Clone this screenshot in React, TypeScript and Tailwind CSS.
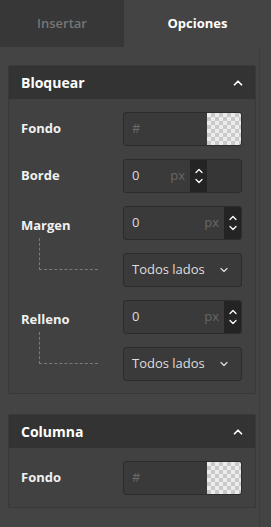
import { ChevronDown, ChevronUp } from "lucide-react";

const font = { fontFamily: '"Open Sans", "Liberation Sans", sans-serif' };

const checker =
  "bg-[image:conic-gradient(#c9c9c9_25%,#ececec_0_50%,#c9c9c9_0_75%,#ececec_0)] bg-[length:8px_8px]";

function Label({ children, low }: { children: React.ReactNode; low?: boolean }) {
  return (
    <div
      className={`w-[114px] shrink-0 pl-3 text-[13px] font-bold text-[#f0f0f0] ${
        low ? "mt-[6px]" : ""
      }`}
    >
      {children}
    </div>
  );
}

function ColorInput() {
  return (
    <div className="flex h-[34px] w-[119px] overflow-hidden rounded-[3px] border border-[#2c2c2c] bg-[#3a3a3a]">
      <span className="flex flex-1 items-center pl-2 text-[13px] text-[#6a6a6a]">#</span>
      <span className={`h-full w-[34px] ${checker}`} />
    </div>
  );
}

function Stepper({ rounded }: { rounded?: boolean }) {
  return (
    <span
      className={`flex h-full w-[17px] flex-col items-center justify-center bg-[#242424] text-white ${
        rounded ? "rounded-r-[3px]" : ""
      }`}
    >
      <ChevronUp size={12} strokeWidth={2.5} className="-mb-[1px]" />
      <ChevronDown size={12} strokeWidth={2.5} className="-mt-[1px]" />
    </span>
  );
}

function NumberInput({ wide }: { wide?: boolean }) {
  return (
    <div className="flex h-[34px] w-[119px] overflow-hidden rounded-[3px] border border-[#2c2c2c] bg-[#3a3a3a]">
      <div className={`flex items-center pl-2 pr-[5px] ${wide ? "flex-1" : "w-[66px]"}`}>
        <span className="flex-1 text-[13px] text-[#dddddd]">0</span>
        <span className="text-[13px] text-[#676767]">px</span>
      </div>
      <Stepper rounded={wide} />
      {!wide && <span className="flex-1 bg-[#363636]" />}
    </div>
  );
}

function SidesSelect() {
  return (
    <div className="flex h-[34px] w-[119px] items-center justify-between rounded-[3px] border border-[#2c2c2c] bg-[#3a3a3a] pl-2 pr-[11px]">
      <span className="text-[13px] text-[#dedede]">Todos lados</span>
      <ChevronDown size={12} strokeWidth={2.5} className="text-[#d8d8d8]" />
    </div>
  );
}

function Connector() {
  return (
    <div className="w-[114px] shrink-0">
      <div className="-mt-[15px] ml-[30px] h-[32px] w-[59px] border-b border-l border-dashed border-[#7a7a7a]" />
    </div>
  );
}

function Panel({ title, children }: { title: string; children: React.ReactNode }) {
  return (
    <section className="w-[248px] rounded-[2px] border border-[#393939] bg-[#414141]">
      <header className="flex h-[33px] items-center justify-between bg-[#333333] pl-3 pr-[10px]">
        <h2 className="text-[14px] font-bold text-white">{title}</h2>
        <ChevronUp size={14} strokeWidth={3} className="text-white" />
      </header>
      <div className="flex flex-col gap-[13px] pb-3 pt-[13px]">{children}</div>
    </section>
  );
}

export default function App() {
  return (
    <div className="flex h-[527px] w-[271px] flex-col overflow-hidden bg-[#444444]" style={font}>
      <nav className="flex h-[47px] shrink-0">
        <div className="flex w-[124px] items-center justify-center bg-[#373737] text-[13px] font-semibold text-[#767676]">
          Insertar
        </div>
        <div className="flex flex-1 items-center justify-center text-[13px] font-bold text-white">
          Opciones
        </div>
      </nav>

      <div className="flex flex-1">
        <div className="flex w-[259px] shrink-0 flex-col gap-5 pl-2 pt-[18px]">
          <Panel title="Bloquear">
            <div className="flex items-center">
              <Label>Fondo</Label>
              <ColorInput />
            </div>
            <div className="flex items-center">
              <Label>Borde</Label>
              <NumberInput />
            </div>
            <div className="flex items-center">
              <Label low>Margen</Label>
              <NumberInput wide />
            </div>
            <div className="flex items-start">
              <Connector />
              <SidesSelect />
            </div>
            <div className="flex items-center">
              <Label low>Relleno</Label>
              <NumberInput wide />
            </div>
            <div className="flex items-start">
              <Connector />
              <SidesSelect />
            </div>
          </Panel>

          <Panel title="Columna">
            <div className="flex items-center">
              <Label>Fondo</Label>
              <ColorInput />
            </div>
          </Panel>
        </div>
        <div className="w-px bg-[#3c3c3c]" />
      </div>
    </div>
  );
}
